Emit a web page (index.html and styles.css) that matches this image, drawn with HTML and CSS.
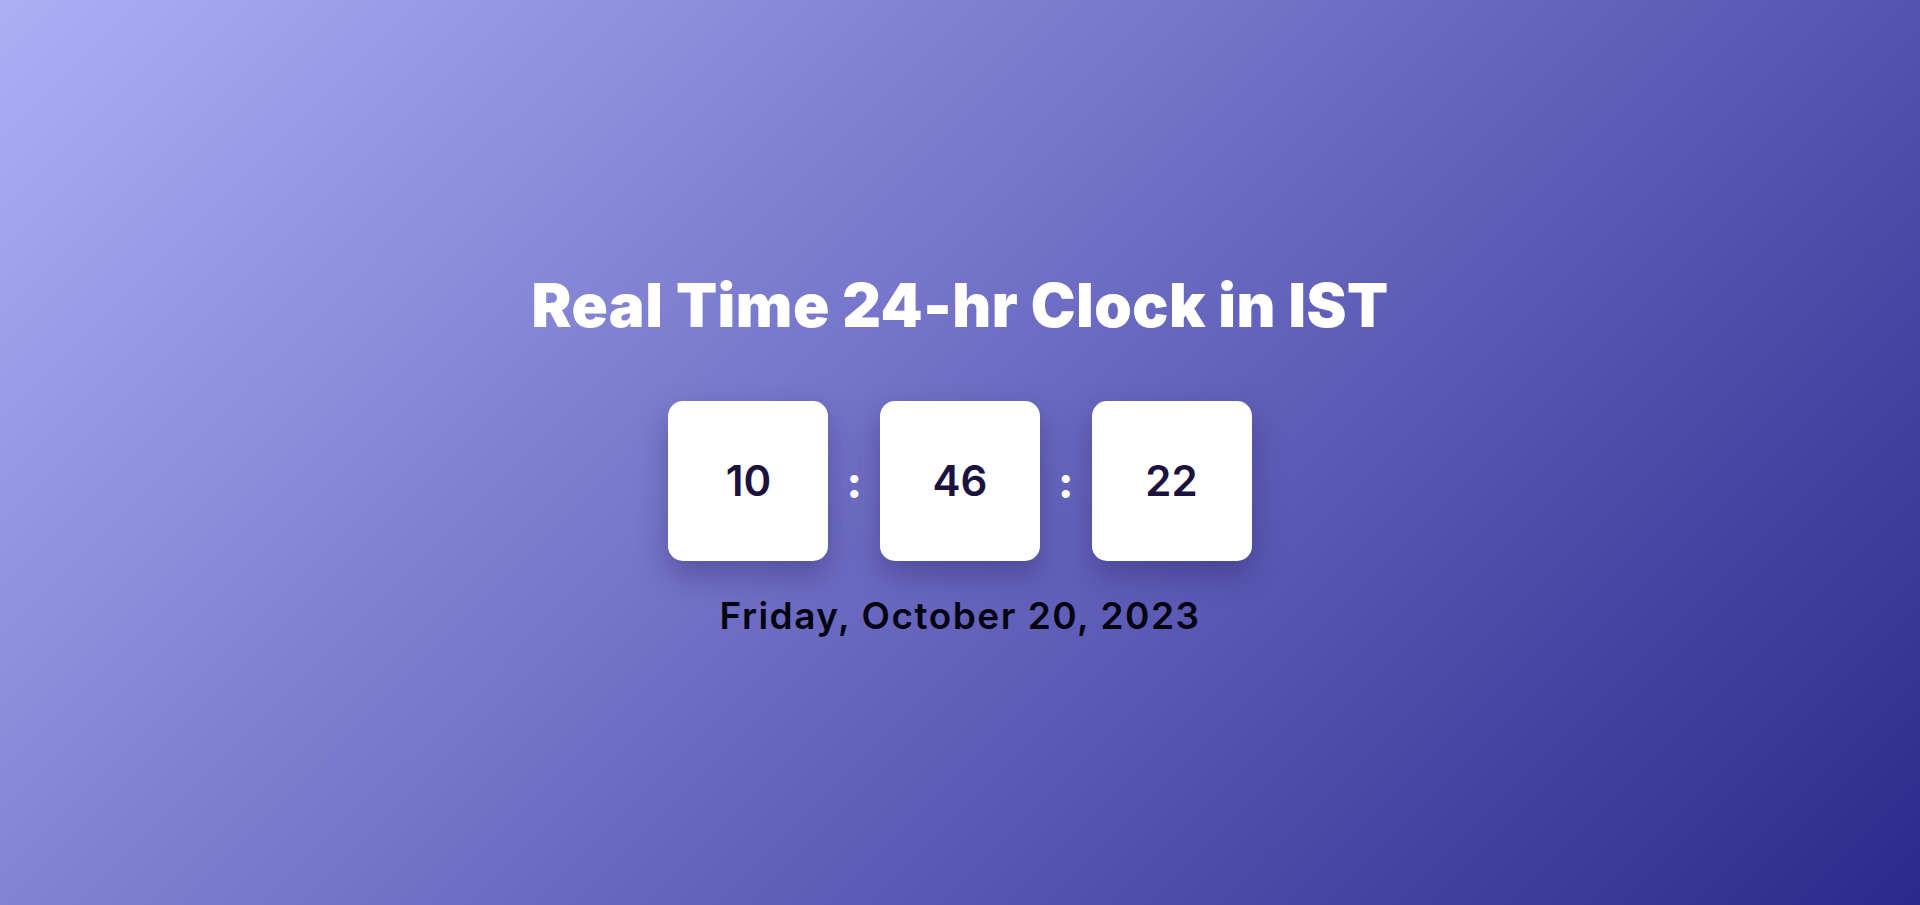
FILE: index.html
```html
<!DOCTYPE html>
<html lang="en">
<head>
<meta charset="utf-8">
<title>Real Time 24-hr Clock in IST</title>
<link rel="stylesheet" href="styles.css">
</head>
<body>
<main class="page">
  <h1 class="title">Real Time 24-hr Clock in IST</h1>
  <div class="clock">
    <div class="unit"><span class="digits">10</span></div>
    <span class="colon">:</span>
    <div class="unit"><span class="digits">46</span></div>
    <span class="colon">:</span>
    <div class="unit"><span class="digits">22</span></div>
  </div>
  <p class="date">Friday, October 20, 2023</p>
</main>
</body>
</html>
```

FILE: styles.css
```css
* { box-sizing: border-box; }

html, body {
  margin: 0;
  height: 100%;
}

body {
  background: linear-gradient(135deg, #adaff5 0%, #6c6bc2 50%, #2c298c 100%);
  font-family: Inter, "Noto Sans", "Liberation Sans", sans-serif;
}

.page {
  height: 100vh;
  display: flex;
  flex-direction: column;
  align-items: center;
  justify-content: center;
}

.title {
  margin: 0 0 60px;
  font-size: 60px;
  line-height: 72px;
  font-weight: 900;
  color: #ffffff;
  letter-spacing: 0.5px;
}

.clock {
  display: flex;
  align-items: center;
  margin-bottom: 33px;
}

.unit {
  width: 160px;
  height: 160px;
  background: #ffffff;
  border-radius: 15px;
  display: flex;
  align-items: center;
  justify-content: center;
  box-shadow: 0 14px 30px rgba(35, 25, 90, 0.35);
}

.digits {
  font-size: 42px;
  font-weight: 600;
  color: #1b1240;
}

.colon {
  margin: 0 18px;
  font-size: 44px;
  font-weight: 800;
  color: #ffffff;
  line-height: 1;
  position: relative;
  top: 1px;
}

.date {
  margin: 0;
  font-size: 37px;
  line-height: 43px;
  font-weight: 600;
  letter-spacing: 1.5px;
  color: #050310;
}
```
